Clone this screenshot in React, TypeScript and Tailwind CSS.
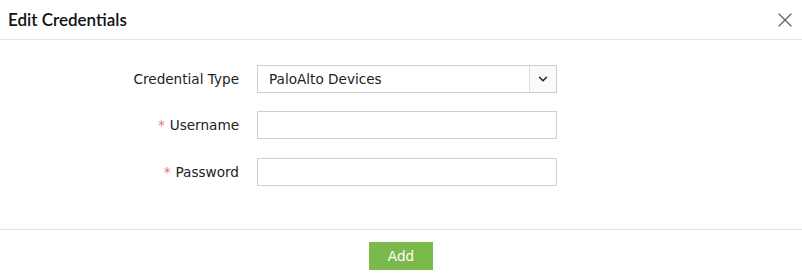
import { ChevronDown, X } from "lucide-react";

const fields = [
  { label: "Username", required: true, top: "mt-[18px]" },
  { label: "Password", required: true, top: "mt-[19px]" },
];

export default function App() {
  return (
    <div className="flex h-[277px] w-[802px] flex-col bg-white font-['DejaVu_Sans',sans-serif] text-[#222]">
      <div className="flex h-[40px] items-center justify-between border-b border-[#e3e3e3] pl-[8px] pr-[5px]">
        <h1 className="font-['Lato',sans-serif] text-[17px] font-semibold text-[#111]">
          Edit Credentials
        </h1>
        <X className="h-[24px] w-[24px] text-[#666]" strokeWidth={1.4} />
      </div>

      <div className="flex flex-1 flex-col pt-[25px]">
        <div className="flex items-center">
          <label className="w-[239px] text-right text-[13.6px]">
            Credential Type
          </label>
          <div className="ml-[18px] flex h-[28px] w-[300px] items-center border border-[#cfcfcf]">
            <span className="flex-1 pl-[11px] text-[13.6px]">PaloAlto Devices</span>
            <div className="flex h-full w-[27px] items-center justify-center border-l border-[#dcdcdc] bg-[#fafafa]">
              <ChevronDown className="h-[14px] w-[14px] text-[#222]" strokeWidth={2.5} />
            </div>
          </div>
        </div>

        {fields.map(({ label, required, top }) => (
          <div key={label} className={`flex items-center ${top}`}>
            <label className="w-[239px] text-right text-[13.6px]">
              {required && <span className="mr-[5px] text-[#f07070]">*</span>}
              {label}
            </label>
            <input
              type="text"
              className="ml-[18px] h-[28px] w-[300px] border border-[#cfcfcf] outline-none"
            />
          </div>
        ))}
      </div>

      <div className="flex h-[48px] justify-center border-t border-[#e3e3e3] pt-[12px]">
        <button className="h-[28px] w-[64px] bg-[#7ab94a] text-[13.6px] text-white">
          Add
        </button>
      </div>
    </div>
  );
}
